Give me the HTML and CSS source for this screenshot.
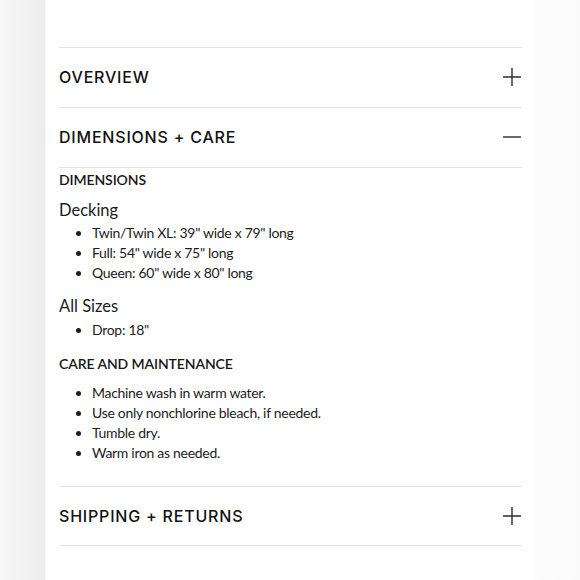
FILE: index.html
```html
<!DOCTYPE html>
<html>
<head>
<meta charset="utf-8">
<link rel="stylesheet" href="styles.css">
</head>
<body>
<div class="page">
  <div class="side-left"></div>
  <main class="column">
    <section class="acc">
      <div class="acc-head">
        <span class="acc-title">OVERVIEW</span>
        <svg class="icon" width="18" height="18" viewBox="0 0 18 18"><path d="M9 0V18M0 9H18" stroke="#2b2b2b" stroke-width="1.4" fill="none"/></svg>
      </div>
    </section>
    <section class="acc">
      <div class="acc-head">
        <span class="acc-title">DIMENSIONS + CARE</span>
        <svg class="icon" width="18" height="18" viewBox="0 0 18 18"><path d="M0 9H18" stroke="#2b2b2b" stroke-width="1.4" fill="none"/></svg>
      </div>
      <div class="acc-body">
        <h4 class="sub">DIMENSIONS</h4>
        <h5 class="group">Decking</h5>
        <ul class="list">
          <li>Twin/Twin XL: 39" wide x 79" long</li>
          <li>Full: 54" wide x 75" long</li>
          <li>Queen: 60" wide x 80" long</li>
        </ul>
        <h5 class="group group-next">All Sizes</h5>
        <ul class="list">
          <li>Drop: 18"</li>
        </ul>
        <h4 class="sub care">CARE AND MAINTENANCE</h4>
        <ul class="list care-list">
          <li>Machine wash in warm water.</li>
          <li>Use only nonchlorine bleach, if needed.</li>
          <li>Tumble dry.</li>
          <li>Warm iron as needed.</li>
        </ul>
      </div>
    </section>
    <section class="acc last">
      <div class="acc-head acc-head-last">
        <span class="acc-title">SHIPPING + RETURNS</span>
        <svg class="icon" width="18" height="18" viewBox="0 0 18 18"><path d="M9 0V18M0 9H18" stroke="#2b2b2b" stroke-width="1.4" fill="none"/></svg>
      </div>
    </section>
  </main>
  <div class="side-right"></div>
</div>
</body>
</html>
```
FILE: styles.css
```css
* { box-sizing: border-box; }
html, body { margin: 0; padding: 0; }
body {
  background: #ffffff;
  font-family: "Lato", "Liberation Sans", sans-serif;
  color: #1c1c1c;
}
.page {
  display: flex;
  width: 580px;
  height: 580px;
  overflow: hidden;
}
.side-left {
  width: 45px;
  flex: none;
  background: linear-gradient(to right, #f6f6f6 0%, #f2f2f2 60%, #ececec 100%);
}
.side-right {
  width: 47px;
  flex: none;
  background: linear-gradient(to right, #fdfdfd, #fafafa);
}
.column {
  flex: 1;
  background: #ffffff;
  padding: 47px 11px 0 14px;
}
.acc {
  border-top: 1px solid #e2e2e2;
}
.acc.last {
  border-bottom: 1px solid #e2e2e2;
}
.acc-head {
  height: 59px;
  display: flex;
  align-items: center;
  justify-content: space-between;
  padding-right: 1px;
  padding-bottom: 1px;
}
.acc-head-last {
  height: 58px;
}
.acc-title {
  font-family: "Inter", "Lato", sans-serif;
  font-size: 16px;
  font-weight: 500;
  letter-spacing: 0.8px;
  color: #111;
}
.icon { display: block; }
.acc-body {
  border-top: 1px solid #e2e2e2;
  padding: 2px 0 23px;
}
.sub {
  margin: 0;
  font-size: 14px;
  font-weight: 600;
  line-height: 20px;
  letter-spacing: -0.1px;
  color: #161616;
}
.sub.care { margin-top: 14px; }
.group {
  margin: 8px 0 1px;
  font-size: 16.5px;
  font-weight: 400;
  line-height: 24px;
}
.group-next { margin: 11px 0 2px; }
.list {
  margin: 0;
  padding-left: 33px;
  font-size: 14px;
  line-height: 20px;
  letter-spacing: -0.3px;
  color: #1c1c1c;
}
.care-list { margin-top: 9px; }
```
